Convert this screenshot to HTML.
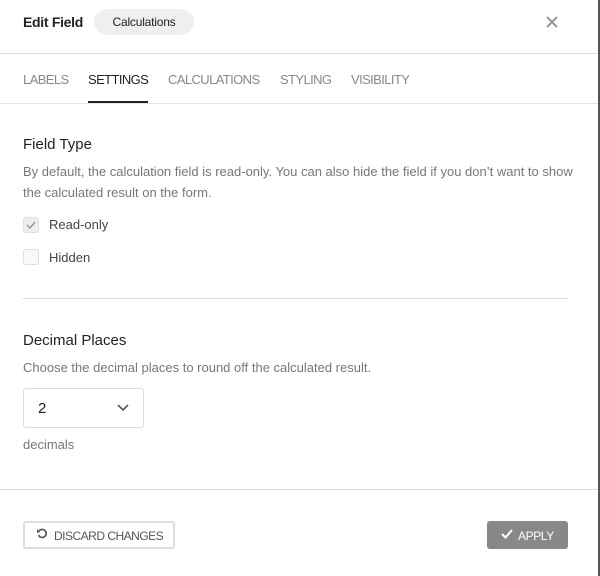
<!DOCTYPE html><html><head><style>
body{margin:0;width:600px;height:576px;background:#fff;font-family:"Liberation Sans",sans-serif;position:relative;overflow:hidden}
.a{position:absolute}
.tab{position:absolute;top:72px;font-size:13px;color:#888;letter-spacing:-.6px}
.cb{position:absolute;left:23px;width:14px;height:14px;border:1px solid #ddd;border-radius:3px;background:#f8f8f8}
.lbl{position:absolute;left:49px;font-size:13px;color:#444}
.desc{font-size:13px;color:#777;line-height:21px}
</style></head><body>
<div class="a" style="right:0;top:0;width:2px;height:576px;background:#555"></div>
<div class="a" style="left:23px;top:14px;font-size:14px;font-weight:bold;color:#222;letter-spacing:-.3px">Edit Field</div>
<div class="a" style="left:94px;top:9px;width:100px;height:26px;border-radius:13px;background:#efefef;font-size:12px;color:#222;text-align:center;line-height:26px;letter-spacing:-.2px">Calculations</div>
<svg class="a" style="left:546px;top:16px" width="12" height="12"><path d="M1 1L11 11M11 1L1 11" stroke="#999" stroke-width="2"/></svg>
<div class="a" style="left:0;top:53px;width:598px;height:1px;background:#ddd"></div>
<div class="tab" style="left:23px">LABELS</div>
<div class="tab" style="left:88px;color:#222">SETTINGS</div>
<div class="tab" style="left:168px">CALCULATIONS</div>
<div class="tab" style="left:280px">STYLING</div>
<div class="tab" style="left:351px">VISIBILITY</div>
<div class="a" style="left:88px;top:101px;width:60px;height:2px;background:#222"></div>
<div class="a" style="left:0;top:103px;width:598px;height:1px;background:#e3e3e3"></div>
<div class="a" style="left:23px;top:136px;font-size:15px;color:#222">Field Type</div>
<div class="a desc" style="left:23px;top:161px;width:560px">By default, the calculation field is read-only. You can also hide the field if you don’t want to show the calculated result on the form.</div>
<div class="cb" style="top:217px;background:#eee"></div>
<svg class="a" style="left:26px;top:220px" width="10" height="10"><path d="M1 5L4 8L9 2" stroke="#999" stroke-width="1.5" fill="none"/></svg>
<div class="lbl" style="top:217px">Read-only</div>
<div class="cb" style="top:249px"></div>
<div class="lbl" style="top:250px">Hidden</div>
<div class="a" style="left:23px;top:298px;width:545px;height:1px;background:#ddd"></div>
<div class="a" style="left:23px;top:332px;font-size:15px;color:#222">Decimal Places</div>
<div class="a desc" style="left:23px;top:357px">Choose the decimal places to round off the calculated result.</div>
<div class="a" style="left:23px;top:388px;width:119px;height:38px;border:1px solid #ddd;border-radius:3px"></div>
<div class="a" style="left:38px;top:400px;font-size:15px;color:#222">2</div>
<svg class="a" style="left:117px;top:404px" width="12" height="8"><path d="M1 1L6 6L11 1" stroke="#555" stroke-width="1.6" fill="none"/></svg>
<div class="a desc" style="left:23px;top:434px">decimals</div>
<div class="a" style="left:0;top:489px;width:598px;height:1px;background:#ddd"></div>
<div class="a" style="left:23px;top:521px;width:148px;height:24px;border:2px solid #ddd;border-radius:3px"></div>
<svg class="a" style="left:36px;top:528px" width="12" height="12"><path d="M3 3A4 4 0 1 1 2.5 7" stroke="#555" stroke-width="1.6" fill="none"/><path d="M1 1L4 4L1 5Z" fill="#555"/></svg>
<div class="a" style="left:54px;top:529px;font-size:12px;color:#555;letter-spacing:-.5px">DISCARD CHANGES</div>
<div class="a" style="left:487px;top:521px;width:81px;height:28px;background:#888;border-radius:3px"></div>
<svg class="a" style="left:501px;top:529px" width="12" height="10"><path d="M1 5L4.5 8.5L11 1" stroke="#fff" stroke-width="2" fill="none"/></svg>
<div class="a" style="left:518px;top:529px;font-size:12px;color:#fff;letter-spacing:-.4px">APPLY</div>
</body></html>
